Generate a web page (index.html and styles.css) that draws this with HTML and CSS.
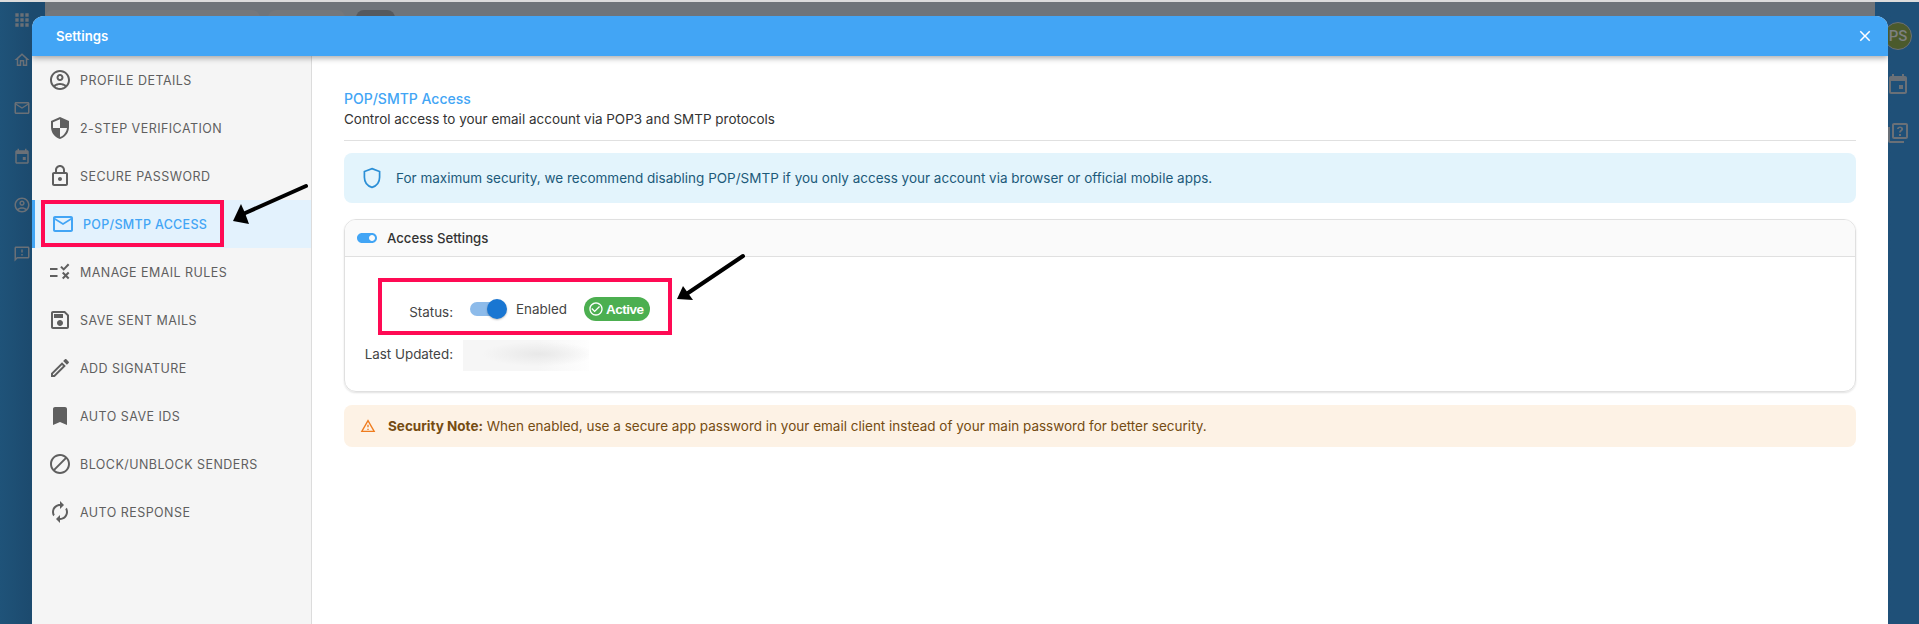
FILE: index.html
```html
<!DOCTYPE html>
<html lang="en">
<head>
<meta charset="utf-8">
<title>Settings</title>
<link rel="stylesheet" href="styles.css">
</head>
<body>
<div class="backdrop">
  <aside class="rail rail-left">
    <svg class="rail-icon rail-apps" viewBox="0 0 24 24"><path d="M4 8h4V4H4v4zm6 12h4v-4h-4v4zm-6 0h4v-4H4v4zm0-6h4v-4H4v4zm6 0h4v-4h-4v4zm6-10v4h4V4h-4zm-6 4h4V4h-4v4zm6 6h4v-4h-4v4zm0 6h4v-4h-4v4z"/></svg>
    <svg class="rail-icon" viewBox="0 0 24 24"><path d="M12 5.69l5 4.5V18h-2v-6H9v6H7v-7.81l5-4.5M12 3L2 12h3v8h6v-6h2v6h6v-8h3L12 3z"/></svg>
    <svg class="rail-icon" viewBox="0 0 24 24"><path d="M20 4H4c-1.1 0-1.99.9-1.99 2L2 18c0 1.1.9 2 2 2h16c1.1 0 2-.9 2-2V6c0-1.1-.9-2-2-2zm0 14H4V8l8 5 8-5v10zm-8-7L4 6h16l-8 5z"/></svg>
    <svg class="rail-icon" viewBox="0 0 24 24"><path d="M19 3h-1V1h-2v2H8V1H6v2H5c-1.1 0-2 .9-2 2v14c0 1.1.9 2 2 2h14c1.1 0 2-.9 2-2V5c0-1.1-.9-2-2-2zm0 16H5V8h14v11zm-6-7h4v4h-4z"/></svg>
    <svg class="rail-icon" viewBox="0 0 24 24"><path d="M12 2C6.48 2 2 6.48 2 12s4.48 10 10 10 10-4.48 10-10S17.52 2 12 2zM7.35 18.5C8.66 17.56 10.26 17 12 17s3.34.56 4.65 1.5c-1.31.94-2.91 1.5-4.65 1.5s-3.34-.56-4.65-1.5zm10.79-1.38C16.45 15.8 14.32 15 12 15s-4.45.8-6.14 2.12C4.7 15.73 4 13.95 4 12c0-4.42 3.58-8 8-8s8 3.58 8 8c0 1.95-.7 3.73-1.86 5.12zM12 6c-1.93 0-3.5 1.57-3.5 3.5S10.07 13 12 13s3.5-1.57 3.5-3.5S13.93 6 12 6zm0 5c-.83 0-1.5-.67-1.5-1.5S11.17 8 12 8s1.5.67 1.5 1.5S12.83 11 12 11z"/></svg>
    <svg class="rail-icon" viewBox="0 0 24 24"><path d="M20 2H4c-1.1 0-1.99.9-1.99 2L2 22l4-4h14c1.1 0 2-.9 2-2V4c0-1.1-.9-2-2-2zm0 14H5.17L4 17.17V4h16v12zm-9-4h2v2h-2zm0-6h2v4h-2z"/></svg>
  </aside>
  <div class="topbar">
    <span class="pill pill-a"></span>
    <span class="pill pill-b"></span>
    <span class="pill pill-c"></span>
  </div>
  <aside class="rail rail-right">
    <span class="avatar">PS</span>
    <svg class="rail-icon" viewBox="0 0 24 24"><path d="M19 3h-1V1h-2v2H8V1H6v2H5c-1.1 0-2 .9-2 2v14c0 1.1.9 2 2 2h14c1.1 0 2-.9 2-2V5c0-1.1-.9-2-2-2zm0 16H5V8h14v11zm-6-7h4v4h-4z"/></svg>
    <svg class="rail-icon" viewBox="0 0 24 24"><path d="M4 6H2v14c0 1.1.9 2 2 2h14v-2H4V6zm16-4H8c-1.1 0-2 .9-2 2v12c0 1.1.9 2 2 2h12c1.1 0 2-.9 2-2V4c0-1.1-.9-2-2-2zm0 14H8V4h12v12zm-7-3h2v2h-2zm1-7.5c-1.7 0-3 1.3-3 2.5h1.8c0-.5.5-1 1.2-1s1.2.5 1.2 1c0 1.2-2.2 1.3-2.2 3.5h2c0-1.4 2.2-1.7 2.2-3.5 0-1.4-1.3-2.5-3.2-2.5z"/></svg>
  </aside>
</div>

<section class="modal">
  <header class="modal-head">
    <span class="modal-title">Settings</span>
    <svg class="close" viewBox="0 0 24 24"><path d="M19 6.41L17.59 5 12 10.59 6.41 5 5 6.41 10.59 12 5 17.59 6.41 19 12 13.41 17.59 19 19 17.59 13.41 12z"/></svg>
  </header>
  <div class="modal-body">
    <nav class="side">
      <a class="item"><svg class="item-icon" viewBox="0 0 24 24"><path d="M12 2C6.48 2 2 6.48 2 12s4.48 10 10 10 10-4.48 10-10S17.52 2 12 2zM7.35 18.5C8.66 17.56 10.26 17 12 17s3.34.56 4.65 1.5c-1.31.94-2.91 1.5-4.65 1.5s-3.34-.56-4.65-1.5zm10.79-1.38C16.45 15.8 14.32 15 12 15s-4.45.8-6.14 2.12C4.7 15.73 4 13.95 4 12c0-4.42 3.58-8 8-8s8 3.58 8 8c0 1.95-.7 3.73-1.86 5.12zM12 6c-1.93 0-3.5 1.57-3.5 3.5S10.07 13 12 13s3.5-1.57 3.5-3.5S13.93 6 12 6zm0 5c-.83 0-1.5-.67-1.5-1.5S11.17 8 12 8s1.5.67 1.5 1.5S12.83 11 12 11z"/></svg><span>PROFILE DETAILS</span></a>
      <a class="item"><svg class="item-icon" viewBox="0 0 24 24"><path d="M12 1L3 5v6c0 5.55 3.84 10.74 9 12 5.16-1.26 9-6.45 9-12V5l-9-4zm0 10.99h7c-.53 4.12-3.28 7.79-7 8.94V12H5V6.3l7-3.11v8.8z"/></svg><span>2-STEP VERIFICATION</span></a>
      <a class="item"><svg class="item-icon" viewBox="0 0 24 24"><path d="M18 8h-1V6c0-2.76-2.24-5-5-5S7 3.24 7 6v2H6c-1.1 0-2 .9-2 2v10c0 1.1.9 2 2 2h12c1.1 0 2-.9 2-2V10c0-1.1-.9-2-2-2zM9 6c0-1.66 1.34-3 3-3s3 1.34 3 3v2H9V6zm9 14H6V10h12v10zm-6-3c1.1 0 2-.9 2-2s-.9-2-2-2-2 .9-2 2 .9 2 2 2z"/></svg><span>SECURE PASSWORD</span></a>
      <a class="item item-active"><svg class="item-icon" viewBox="0 0 24 24"><path d="M20 4H4c-1.1 0-1.99.9-1.99 2L2 18c0 1.1.9 2 2 2h16c1.1 0 2-.9 2-2V6c0-1.1-.9-2-2-2zm0 14H4V8l8 5 8-5v10zm-8-7L4 6h16l-8 5z"/></svg><span>POP/SMTP ACCESS</span></a>
      <a class="item"><svg class="item-icon" viewBox="0 0 24 24"><path d="M2 8h7.5v2H2zm0 7h7.5v2H2zM12.2 7.3l1.5-1.4 2 2 4.2-4.3 1.5 1.4-5.7 5.700zM14 13.200l1.4-1.4 2.3 2.3 2.3-2.3 1.4 1.4-2.3 2.3 2.3 2.3-1.4 1.4-2.3-2.3-2.3 2.3-1.4-1.4 2.3-2.3z"/></svg><span>MANAGE EMAIL RULES</span></a>
      <a class="item"><svg class="item-icon" viewBox="0 0 24 24"><path d="M17 3H5c-1.11 0-2 .9-2 2v14c0 1.1.89 2 2 2h14c1.1 0 2-.9 2-2V7l-4-4zm2 16H5V5h11.17L19 7.83V19zm-7-7c-1.66 0-3 1.34-3 3s1.34 3 3 3 3-1.34 3-3-1.34-3-3-3zM6 6h9v4H6z"/></svg><span>SAVE SENT MAILS</span></a>
      <a class="item"><svg class="item-icon" viewBox="0 0 24 24"><path d="M3 17.25V21h3.75L17.81 9.94l-3.75-3.75L3 17.25zM5.92 19H5v-.92l9.06-9.06.92.92L5.92 19zM20.71 5.63l-2.34-2.34c-.2-.2-.45-.29-.71-.29s-.51.1-.7.29l-1.83 1.83 3.75 3.75 1.83-1.83c.39-.39.39-1.02 0-1.41z"/></svg><span>ADD SIGNATURE</span></a>
      <a class="item"><svg class="item-icon" viewBox="0 0 24 24"><path d="M17 3H7c-1.1 0-1.99.9-1.99 2L5 21l7-3 7 3V5c0-1.1-.9-2-2-2z"/></svg><span>AUTO SAVE IDS</span></a>
      <a class="item"><svg class="item-icon" viewBox="0 0 24 24"><path d="M12 2C6.48 2 2 6.48 2 12s4.48 10 10 10 10-4.48 10-10S17.52 2 12 2zM4 12c0-4.42 3.58-8 8-8 1.85 0 3.55.63 4.9 1.69L5.69 16.9C4.63 15.55 4 13.85 4 12zm8 8c-1.85 0-3.55-.63-4.9-1.69L18.31 7.1C19.37 8.45 20 10.15 20 12c0 4.42-3.58 8-8 8z"/></svg><span>BLOCK/UNBLOCK SENDERS</span></a>
      <a class="item"><svg class="item-icon" viewBox="0 0 24 24"><path d="M12 6v3l4-4-4-4v3c-4.42 0-8 3.58-8 8 0 1.57.46 3.03 1.24 4.26L6.7 14.8c-.45-.83-.7-1.79-.7-2.8 0-3.31 2.69-6 6-6zm6.76 1.74L17.3 9.2c.44.84.7 1.79.7 2.8 0 3.31-2.69 6-6 6v-3l-4 4 4 4v-3c4.42 0 8-3.58 8-8 0-1.57-.46-3.03-1.24-4.26z"/></svg><span>AUTO RESPONSE</span></a>
    </nav>
    <main class="content">
      <h2 class="title">POP/SMTP Access</h2>
      <p class="subtitle">Control access to your email account via POP3 and SMTP protocols</p>
      <hr class="rule">
      <div class="notice notice-info">
        <svg class="notice-icon" viewBox="0 0 24 24"><path d="M12 2.6l7.6 2.9v5.7c0 4.7-3.1 8.7-7.6 10.2-4.5-1.5-7.6-5.5-7.6-10.2V5.500z"/></svg>
        <span>For maximum security, we recommend disabling POP/SMTP if you only access your account via browser or official mobile apps.</span>
      </div>
      <div class="card">
        <div class="card-head">
          <svg class="card-icon" viewBox="0 0 24 24"><path d="M17 7H7c-2.760 0-5 2.240-5 5s2.240 5 5 5h10c2.760 0 5-2.240 5-5s-2.240-5-5-5zm0 8c-1.660 0-3-1.340-3-3s1.340-3 3-3 3 1.340 3 3-1.340 3-3 3z"/></svg>
          <span>Access Settings</span>
        </div>
        <div class="card-body">
          <div class="row row-status">
            <span class="label label-status">Status:</span>
            <span class="switch"><span class="knob"></span></span>
            <span class="state">Enabled</span>
            <span class="badge">
              <svg class="badge-icon" viewBox="0 0 24 24"><path d="M16.590 7.580L10 14.170l-3.590-3.580L5 12l5 5 8-8zM12 2C6.480 2 2 6.480 2 12s4.480 10 10 10 10-4.480 10-10S17.520 2 12 2zm0 18c-4.420 0-8-3.580-8-8s3.580-8 8-8 8 3.580 8 8-3.580 8-8 8z"/></svg>
              Active
            </span>
          </div>
          <div class="row row-updated">
            <span class="label label-updated">Last Updated:</span>
            <span class="blurred"></span>
          </div>
        </div>
      </div>
      <div class="notice notice-warn">
        <svg class="warn-icon" viewBox="0 0 24 24"><path d="M12 5.990L19.530 19H4.470L12 5.990M12 2L1 21h22L12 2zm1 14h-2v2h2v-2zm0-6h-2v4h2v-4z"/></svg>
        <span><b class="strong">Security Note:</b> When enabled, use a secure app password in your email client instead of your main password for better security.</span>
      </div>
    </main>
  </div>
</section>

<div class="mark mark-nav"></div>
<div class="mark mark-status"></div>
<svg class="arrows" viewBox="0 0 1919 624">
  <path class="arrow-line" d="M306 186L243 214"/>
  <path class="arrow-head" d="M233 221L241 204L245 213L249 224z"/>
  <path class="arrow-line" d="M743 256L688 293"/>
  <path class="arrow-head" d="M677 299L683 286L688 293L693 300z"/>
</svg>
</body>
</html>
```

FILE: styles.css
```css
* { box-sizing: border-box; }
html, body { margin: 0; height: 100%; overflow: hidden; }
body { font-family: Inter, "Liberation Sans", sans-serif; background: #1f5078; color: #333; position: relative; width: 1919px; height: 624px; }

.backdrop { display: flex; height: 624px; background: linear-gradient(90deg, #1f5379, #1c4a6e 32px, #1f5078 1900px); border-top: 2px solid #dcdcdc; }
.rail { display: flex; flex-direction: column; align-items: center; flex: none; }
.rail-left { width: 45px; padding: 8px 1px 0 0; gap: 30.500px; }
.rail-left .rail-icon { width: 18px; height: 18px; }
.rail-left .rail-apps { width: 20px; height: 20px; margin-bottom: -10px; }
.rail-right { width: 44px; padding: 20px 0 0 2px; gap: 24px; }
.rail-icon { width: 24px; height: 24px; fill: #6a7077; flex: none; }
.topbar { flex: 1; height: 100%; background: #6f7479; display: flex; align-items: flex-start; padding-top: 8px; }
.pill { display: block; height: 20px; border-radius: 8px; background: #75777a; }
.pill-a { width: 215px; }
.pill-b { width: 77px; margin-left: 8px; }
.pill-c { width: 39px; margin-left: 11px; background: #55595e; }
.avatar { width: 28px; height: 28px; border-radius: 50%; background: #4b5a2c; color: #7d8080; border: 1px solid #6a7077; font: 500 15px/26px Roboto, sans-serif; text-align: center; margin-bottom: -1px; }

.modal { position: absolute; left: 32px; top: 16px; width: 1856px; height: 608px; background: #fff; border-radius: 12px 12px 0 0; display: flex; flex-direction: column; overflow: hidden; }
.modal-head { height: 40px; flex: none; background: #42a5f5; color: #fff; display: flex; align-items: center; justify-content: space-between; padding: 0 14px 0 24px; box-shadow: 0 2px 6px rgba(0,0,0,.35); position: relative; z-index: 1; }
.modal-title { font-size: 13.200px; font-weight: 600; }
.close { width: 18px; height: 18px; fill: #fff; }
.modal-body { flex: 1; display: flex; min-height: 0; }

.side { width: 280px; flex: none; background: #f5f5f5; border-right: 1px solid #dcdcdc; display: flex; flex-direction: column; }
.item { height: 48px; display: flex; align-items: center; gap: 8px; padding-left: 16px; color: #5f5f5f; font-size: 12.500px; font-weight: 400; letter-spacing: .45px; }
.item-icon { width: 24px; height: 24px; fill: #5f5f5f; flex: none; }
.item-active { background: #e3f2fd; color: #42a5f5; border-left: 3px solid #42a5f5; font-weight: 500; letter-spacing: .3px; }
.item-active .item-icon { fill: #42a5f5; }

.content { flex: 1; padding: 33px 32px 0 32px; }
.title { margin: 0; font-size: 14px; line-height: 20px; font-weight: 500; color: #42a5f5; }
.subtitle { margin: 0; font-size: 13.480px; line-height: 20px; color: #333; }
.rule { margin: 11px 0 12px; border: 0; border-top: 1px solid #e0e0e0; }

.notice { display: flex; align-items: center; border-radius: 8px; font-size: 13.500px; }
.notice-info { height: 50px; background: #e3f4fc; color: #1c5a7a; padding-left: 16px; gap: 12px; }
.notice-icon { width: 24px; height: 24px; fill: none; stroke: #2b8fd6; stroke-width: 1.700; }
.notice-warn { height: 42px; background: #fdf2e5; color: #754c12; padding-left: 16px; gap: 12px; }
.warn-icon { width: 16px; height: 16px; fill: #ef7c1e; }
.strong { font-weight: 700; }

.card { margin: 16px 0 13px; height: 173px; border: 1px solid #e0e0e0; border-radius: 12px; box-shadow: 0 1px 2px rgba(0,0,0,.12); overflow: hidden; }
.card-head { height: 37px; background: #fafafa; border-bottom: 1px solid #e0e0e0; display: flex; align-items: center; gap: 8px; padding-left: 10px; font-size: 13.200px; font-weight: 500; color: #333; }
.card-icon { width: 24px; height: 24px; fill: #42a5f5; }
.card-body { display: flex; flex-direction: column; padding-left: 18px; }
.row { display: flex; align-items: center; font-size: 13.400px; color: #444; }
.label { width: 90px; text-align: right; white-space: nowrap; }
.label-status { padding-top: 5px; }
.label-updated { padding-bottom: 3px; }
.row-status { height: 24px; margin-top: 40px; }
.row-updated { height: 31px; margin-top: 19px; }
.switch { width: 37px; height: 20px; margin-left: 17px; border-radius: 10px; position: relative; display: block; }
.switch::before { content: ""; position: absolute; left: 0; top: 3px; width: 34px; height: 14px; background: #8dbbea; border-radius: 7px; }
.knob { position: absolute; right: 0; top: 0; width: 20px; height: 20px; background: #1976d2; border-radius: 50%; box-shadow: 0 1px 2px rgba(0,0,0,.25); }
.state { margin-left: 9px; width: 51px; white-space: nowrap; }
.badge { display: inline-flex; align-items: center; gap: 2px; height: 24px; width: 66px; margin-left: 17px; padding-left: 4px; background: #4caf50; color: #fff; border-radius: 12px; font: 700 13.500px "Liberation Sans", sans-serif; letter-spacing: -.5px; }
.badge-icon { width: 16px; height: 16px; fill: #fff; }
.blurred { display: block; width: 126px; height: 31px; margin-left: 10px; background: radial-gradient(ellipse 45% 40% at 60% 45%, #e8e8e8, rgba(240,240,240,0)), linear-gradient(90deg, #f6f6f6 60%, #fefefe); }

.mark { position: absolute; border: 4px solid #ff0a54; }
.mark-nav { left: 41px; top: 200px; width: 183px; height: 47px; }
.mark-status { left: 378px; top: 278px; width: 294px; height: 57px; }
.arrows { position: absolute; left: 0; top: 0; width: 1919px; height: 624px; pointer-events: none; }
.arrow-line { stroke: #000; stroke-width: 4; stroke-linecap: round; fill: none; }
.arrow-head { fill: #000; }
```
